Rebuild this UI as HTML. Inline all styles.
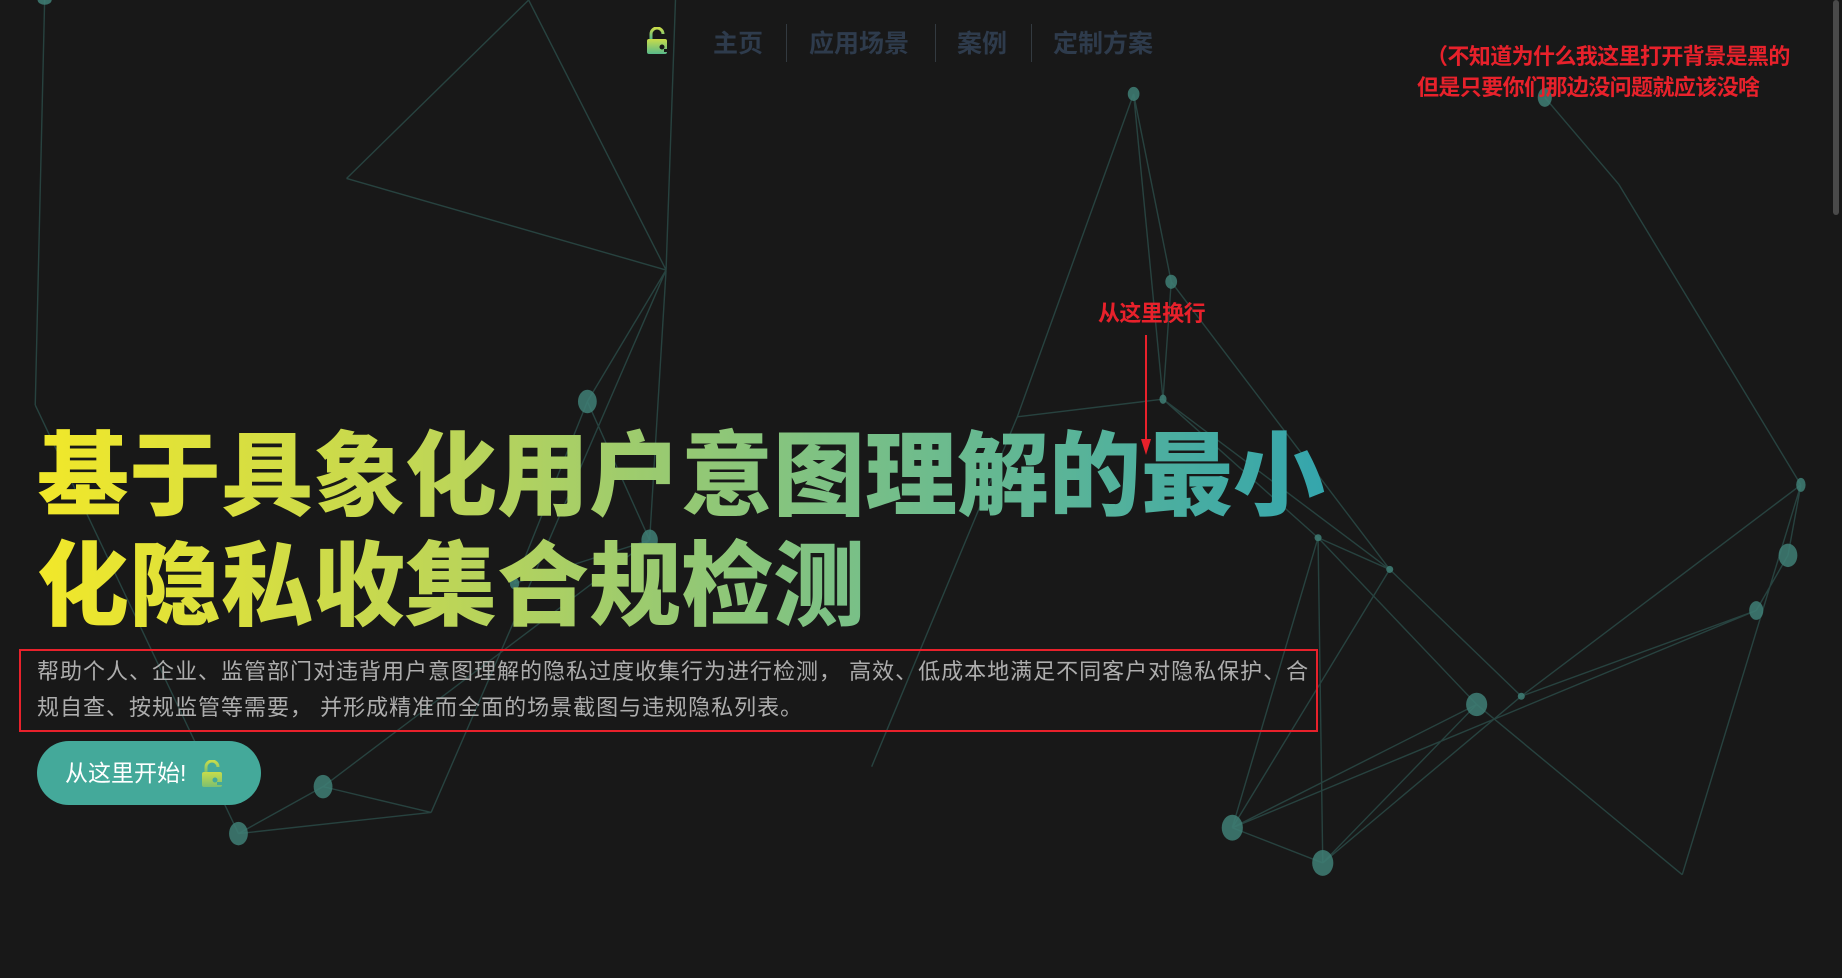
<!DOCTYPE html>
<html><head><meta charset="utf-8"><style>
html,body{margin:0;padding:0;width:1842px;height:978px;overflow:hidden;background:#181818;font-family:"Liberation Sans","Noto Sans CJK SC",sans-serif;}
svg.bg{position:absolute;left:0;top:0;}
.nav{position:absolute;top:24px;left:0;height:40px;}
.nav span{position:absolute;top:0;font-size:25px;font-weight:bold;color:#2e3b4c;line-height:40px;white-space:nowrap;}
.sep{position:absolute;top:22px;width:1px;height:38px;background:#333a40;}
h1{position:absolute;left:37px;top:422px;margin:0;font-size:92px;line-height:110px;font-weight:900;width:1330px;
background:linear-gradient(90deg,#f2e829 0%,#bfd656 30%,#7cc185 60%,#2ea3b0 100%);-webkit-background-clip:text;background-clip:text;color:transparent;letter-spacing:0;}
.box{position:absolute;left:19px;top:649px;width:1295px;height:79px;border:2px solid #e8212b;}
.sub{position:absolute;left:37px;top:654px;width:1290px;font-size:22px;line-height:36px;color:#adadad;letter-spacing:1px;white-space:nowrap;}
.btn{position:absolute;left:37px;top:741px;width:224px;height:64px;border-radius:32px;background:#44a99a;color:#fff;font-size:23px;line-height:64px;}
.btn b{position:absolute;left:28px;font-weight:normal;}
.red{position:absolute;color:#e8212b;font-weight:bold;font-size:22px;white-space:nowrap;line-height:30px;letter-spacing:-0.6px;}
.sb{position:absolute;left:1833px;top:0;width:6px;height:215px;background:#4a4a4a;border-radius:3px;}
</style></head><body>
<svg class="bg" width="1842" height="978" viewBox="0 0 1568 833" preserveAspectRatio="none">
<g stroke="#2a4a46" stroke-width="1.2" fill="none" opacity="0.85">
<path d="M38 0 L30 345 M295 152 L450 0 M295 152 L567 230 M450 0 L567 230 M567 230 L500 342 M500 342 L553 460 M567 230 L553 460 M567 230 L575 0 M500 342 L438 497 M553 460 L438 497 M567 230 L367 692 M275 670 L203 710 M203 710 L367 692 M275 670 L367 692 M30 345 L203 710 M553 460 L275 670"/>
<path d="M965 80 L997 240 M965 80 L990 340 M997 240 L990 340 M965 80 L866 355 M866 355 L990 340 M990 340 L1122 458 M997 240 L1183 485 M866 355 L742 653 M1122 458 L1183 485 M1122 458 L1257 600 M1183 485 L1295 593 M1257 600 L1049 705 M1257 600 L1126 735 M1295 593 L1126 735 M1049 705 L1126 735 M1122 458 L1049 705 M1122 458 L1126 735 M1295 593 L1495 520 M1495 520 L1522 473 M1522 473 L1533 413 M1533 413 L1432 745 M1257 600 L1432 745 M1378 157 L1533 413 M1315 83 L1378 157 M1183 485 L1049 705 M1295 593 L1533 413 M1049 705 L1495 520 M990 340 L1183 485"/>
</g>
<g fill="#3f7f76" opacity="0.85">
<ellipse cx="500" cy="342" rx="8" ry="10"/><ellipse cx="553" cy="460" rx="7" ry="9"/><ellipse cx="965" cy="80" rx="5" ry="6"/><ellipse cx="997" cy="240" rx="5" ry="6"/><ellipse cx="990" cy="340" rx="3" ry="4"/><ellipse cx="1257" cy="600" rx="9" ry="10"/><ellipse cx="1049" cy="705" rx="9" ry="11"/><ellipse cx="1126" cy="735" rx="9" ry="11"/><ellipse cx="1522" cy="473" rx="8" ry="10"/><ellipse cx="1495" cy="520" rx="6" ry="8"/><ellipse cx="1533" cy="413" rx="4" ry="6"/><ellipse cx="1315" cy="83" rx="6" ry="8"/><ellipse cx="275" cy="670" rx="8" ry="10"/><ellipse cx="203" cy="710" rx="8" ry="10"/><ellipse cx="438" cy="497" rx="4" ry="5"/><ellipse cx="38" cy="0" rx="6" ry="4"/><ellipse cx="1122" cy="458" rx="3" ry="3"/><ellipse cx="1183" cy="485" rx="3" ry="3"/><ellipse cx="1295" cy="593" rx="3" ry="3"/>
</g>
</svg>
<svg style="position:absolute;left:646px;top:27px" width="26" height="28" viewBox="0 0 26 28">
<defs><linearGradient id="g" x1="0" y1="0" x2="0" y2="1"><stop offset="0" stop-color="#c8dc4a"/><stop offset="1" stop-color="#58b98a"/></linearGradient></defs>
<path d="M5 12 V7 a6 6 0 0 1 12 0" stroke="url(#g)" stroke-width="3" fill="none"/>
<rect x="1" y="12" width="20" height="15" rx="2" fill="url(#g)"/>
<circle cx="16" cy="20" r="2.5" fill="#181818"/><rect x="18" y="22" width="6" height="3" fill="#181818"/>
</svg>
<div class="nav">
<span style="left:713px">主页</span>
<div class="sep" style="left:786px;top:0"></div>
<span style="left:809px">应用场景</span>
<div class="sep" style="left:935px;top:0"></div>
<span style="left:957px">案例</span>
<div class="sep" style="left:1031px;top:0"></div>
<span style="left:1053px">定制方案</span>
</div>
<div class="red" style="left:1426px;top:42px">（不知道为什么我这里打开背景是黑的</div>
<div class="red" style="left:1417px;top:73px">但是只要你们那边没问题就应该没啥</div>
<div class="red" style="left:1098px;top:299px">从这里换行</div>
<svg style="position:absolute;left:1138px;top:335px" width="16" height="122"><path d="M8 0 V110" stroke="#e8212b" stroke-width="2"/><path d="M3 104 L8 120 L13 104 Z" fill="#e8212b"/></svg>
<h1>基于具象化用户意图理解的最小<br>化隐私收集合规检测</h1>
<div class="box"></div>
<div class="sub">帮助个人、企业、监管部门对违背用户意图理解的隐私过度收集行为进行检测， 高效、低成本地满足不同客户对隐私保护、合<br>规自查、按规监管等需要， 并形成精准而全面的场景截图与违规隐私列表。</div>
<div class="btn"><b>从这里开始!</b>
<svg style="position:absolute;left:164px;top:19px" width="26" height="28" viewBox="0 0 26 28">
<defs><linearGradient id="g2" x1="0" y1="0" x2="0" y2="1"><stop offset="0" stop-color="#c8dc4a"/><stop offset="1" stop-color="#7cc070"/></linearGradient></defs>
<path d="M5 12 V7 a6 6 0 0 1 12 0" stroke="url(#g2)" stroke-width="3" fill="none"/>
<rect x="1" y="12" width="20" height="15" rx="2" fill="url(#g2)"/>
<circle cx="14" cy="20" r="2.5" fill="#44a99a"/><rect x="16" y="22" width="6" height="3" fill="#44a99a"/>
</svg></div>
<div class="sb"></div>
</body></html>
